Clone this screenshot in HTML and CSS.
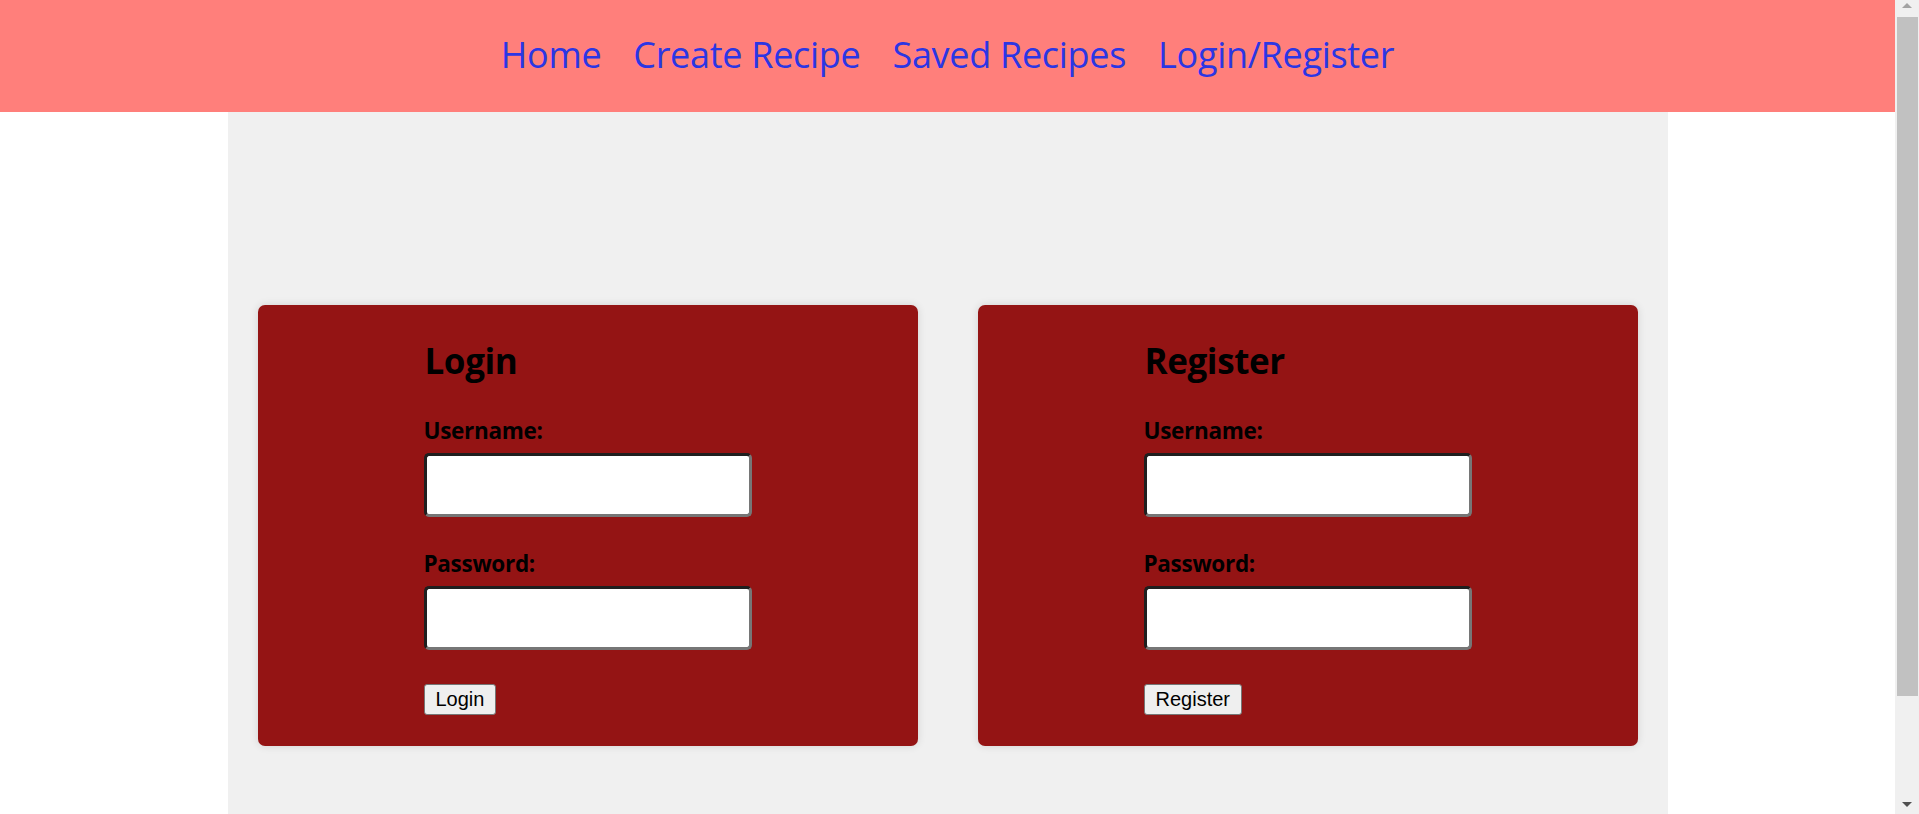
FILE: index.html
```html
<!DOCTYPE html>
<html lang="en">
<head>
<meta charset="utf-8">
<title>Login / Register</title>
<link rel="stylesheet" href="styles.css">
</head>
<body>
  <div class="page">
    <nav class="topnav">
      <a class="nav-link" href="#">Home</a>
      <a class="nav-link" href="#">Create Recipe</a>
      <a class="nav-link" href="#">Saved Recipes</a>
      <a class="nav-link" href="#">Login/Register</a>
    </nav>
    <main class="content">
      <section class="card">
        <form class="auth-form">
          <h2 class="form-title">Login</h2>
          <div class="form-group">
            <label class="form-label" for="login-user">Username:</label>
            <input class="form-input" id="login-user" type="text">
          </div>
          <div class="form-group">
            <label class="form-label" for="login-pass">Password:</label>
            <input class="form-input" id="login-pass" type="password">
          </div>
          <div class="form-actions">
            <button class="form-button" type="button">Login</button>
          </div>
        </form>
      </section>
      <section class="card">
        <form class="auth-form">
          <h2 class="form-title">Register</h2>
          <div class="form-group">
            <label class="form-label" for="reg-user">Username:</label>
            <input class="form-input" id="reg-user" type="text">
          </div>
          <div class="form-group">
            <label class="form-label" for="reg-pass">Password:</label>
            <input class="form-input" id="reg-pass" type="password">
          </div>
          <div class="form-actions">
            <button class="form-button" type="button">Register</button>
          </div>
        </form>
      </section>
    </main>
  </div>
  <div class="scrollbar" aria-hidden="true">
    <svg class="scroll-arrow" width="24" height="17" viewBox="0 0 24 17"><polygon points="7,8 12,3 17,8" fill="#a3a3a3"/></svg>
    <div class="scroll-track"><div class="scroll-thumb"></div></div>
    <svg class="scroll-arrow" width="24" height="17" viewBox="0 0 24 17"><polygon points="7,5 17,5 12,10" fill="#505050"/></svg>
  </div>
</body>
</html>
```

FILE: styles.css
```css
html, body {
  margin: 0;
  padding: 0;
}

body {
  display: flex;
  width: 1919px;
  height: 814px;
  overflow: hidden;
  background: #ffffff;
  font-family: "Open Sans", "Noto Sans", sans-serif;
}

.page {
  flex: 1;
  min-width: 0;
  display: flex;
  flex-direction: column;
}

.topnav {
  height: 112px;
  box-sizing: border-box;
  padding-top: 33px;
  background: #ff7f7b;
  display: flex;
  justify-content: center;
  align-items: flex-start;
  gap: 32px;
}

.nav-link {
  font-size: 36px;
  line-height: 44px;
  letter-spacing: -0.3px;
  color: #2b36e4;
  text-decoration: none;
}

.content {
  flex: 1;
  width: 1440px;
  margin: 0 auto;
  box-sizing: border-box;
  padding: 193px 30px 0;
  background: #f0f0f0;
  display: grid;
  grid-template-columns: 1fr 1fr;
  column-gap: 60px;
  align-items: start;
}

.card {
  background: #941414;
  border-radius: 7px;
  box-shadow: 0 0 8px rgba(0, 0, 0, 0.12);
  padding: 36px 0 31px;
}

.auth-form {
  width: 328px;
  margin: 0 auto;
  display: flex;
  flex-direction: column;
}

.form-title {
  margin: 0 0 0 1px;
  font-size: 35px;
  line-height: 40px;
  font-weight: 700;
  letter-spacing: -0.4px;
  color: #000000;
}

.form-group {
  display: flex;
  flex-direction: column;
  gap: 9px;
  margin-top: 37px;
}

.form-group + .form-group {
  margin-top: 34px;
}

.form-label {
  font-size: 22.5px;
  line-height: 26px;
  font-weight: 700;
  letter-spacing: -0.3px;
  color: #000000;
}

.form-input {
  box-sizing: border-box;
  width: 328px;
  height: 64px;
  margin: 0;
  border: 3px solid;
  border-color: #1f1f1f #767676 #767676 #1f1f1f;
  border-radius: 5px;
  background: #ffffff;
  font-size: 20px;
}

.form-actions {
  margin-top: 34px;
}

.form-button {
  margin: 0;
  padding: 3px 11px;
  font-family: "Liberation Sans", Arial, sans-serif;
  font-size: 20px;
  line-height: normal;
  color: #000000;
  background: #efefef;
  border: 1px solid #767676;
  border-radius: 3px;
}

.scrollbar {
  width: 24px;
  flex: none;
  background: #f0f0f0;
  display: flex;
  flex-direction: column;
}

.scroll-arrow {
  display: block;
  flex: none;
}

.scroll-track {
  flex: 1;
}

.scroll-thumb {
  width: 21px;
  height: 679px;
  margin: 0 0 0 2px;
  background: #c1c1c1;
}
```
